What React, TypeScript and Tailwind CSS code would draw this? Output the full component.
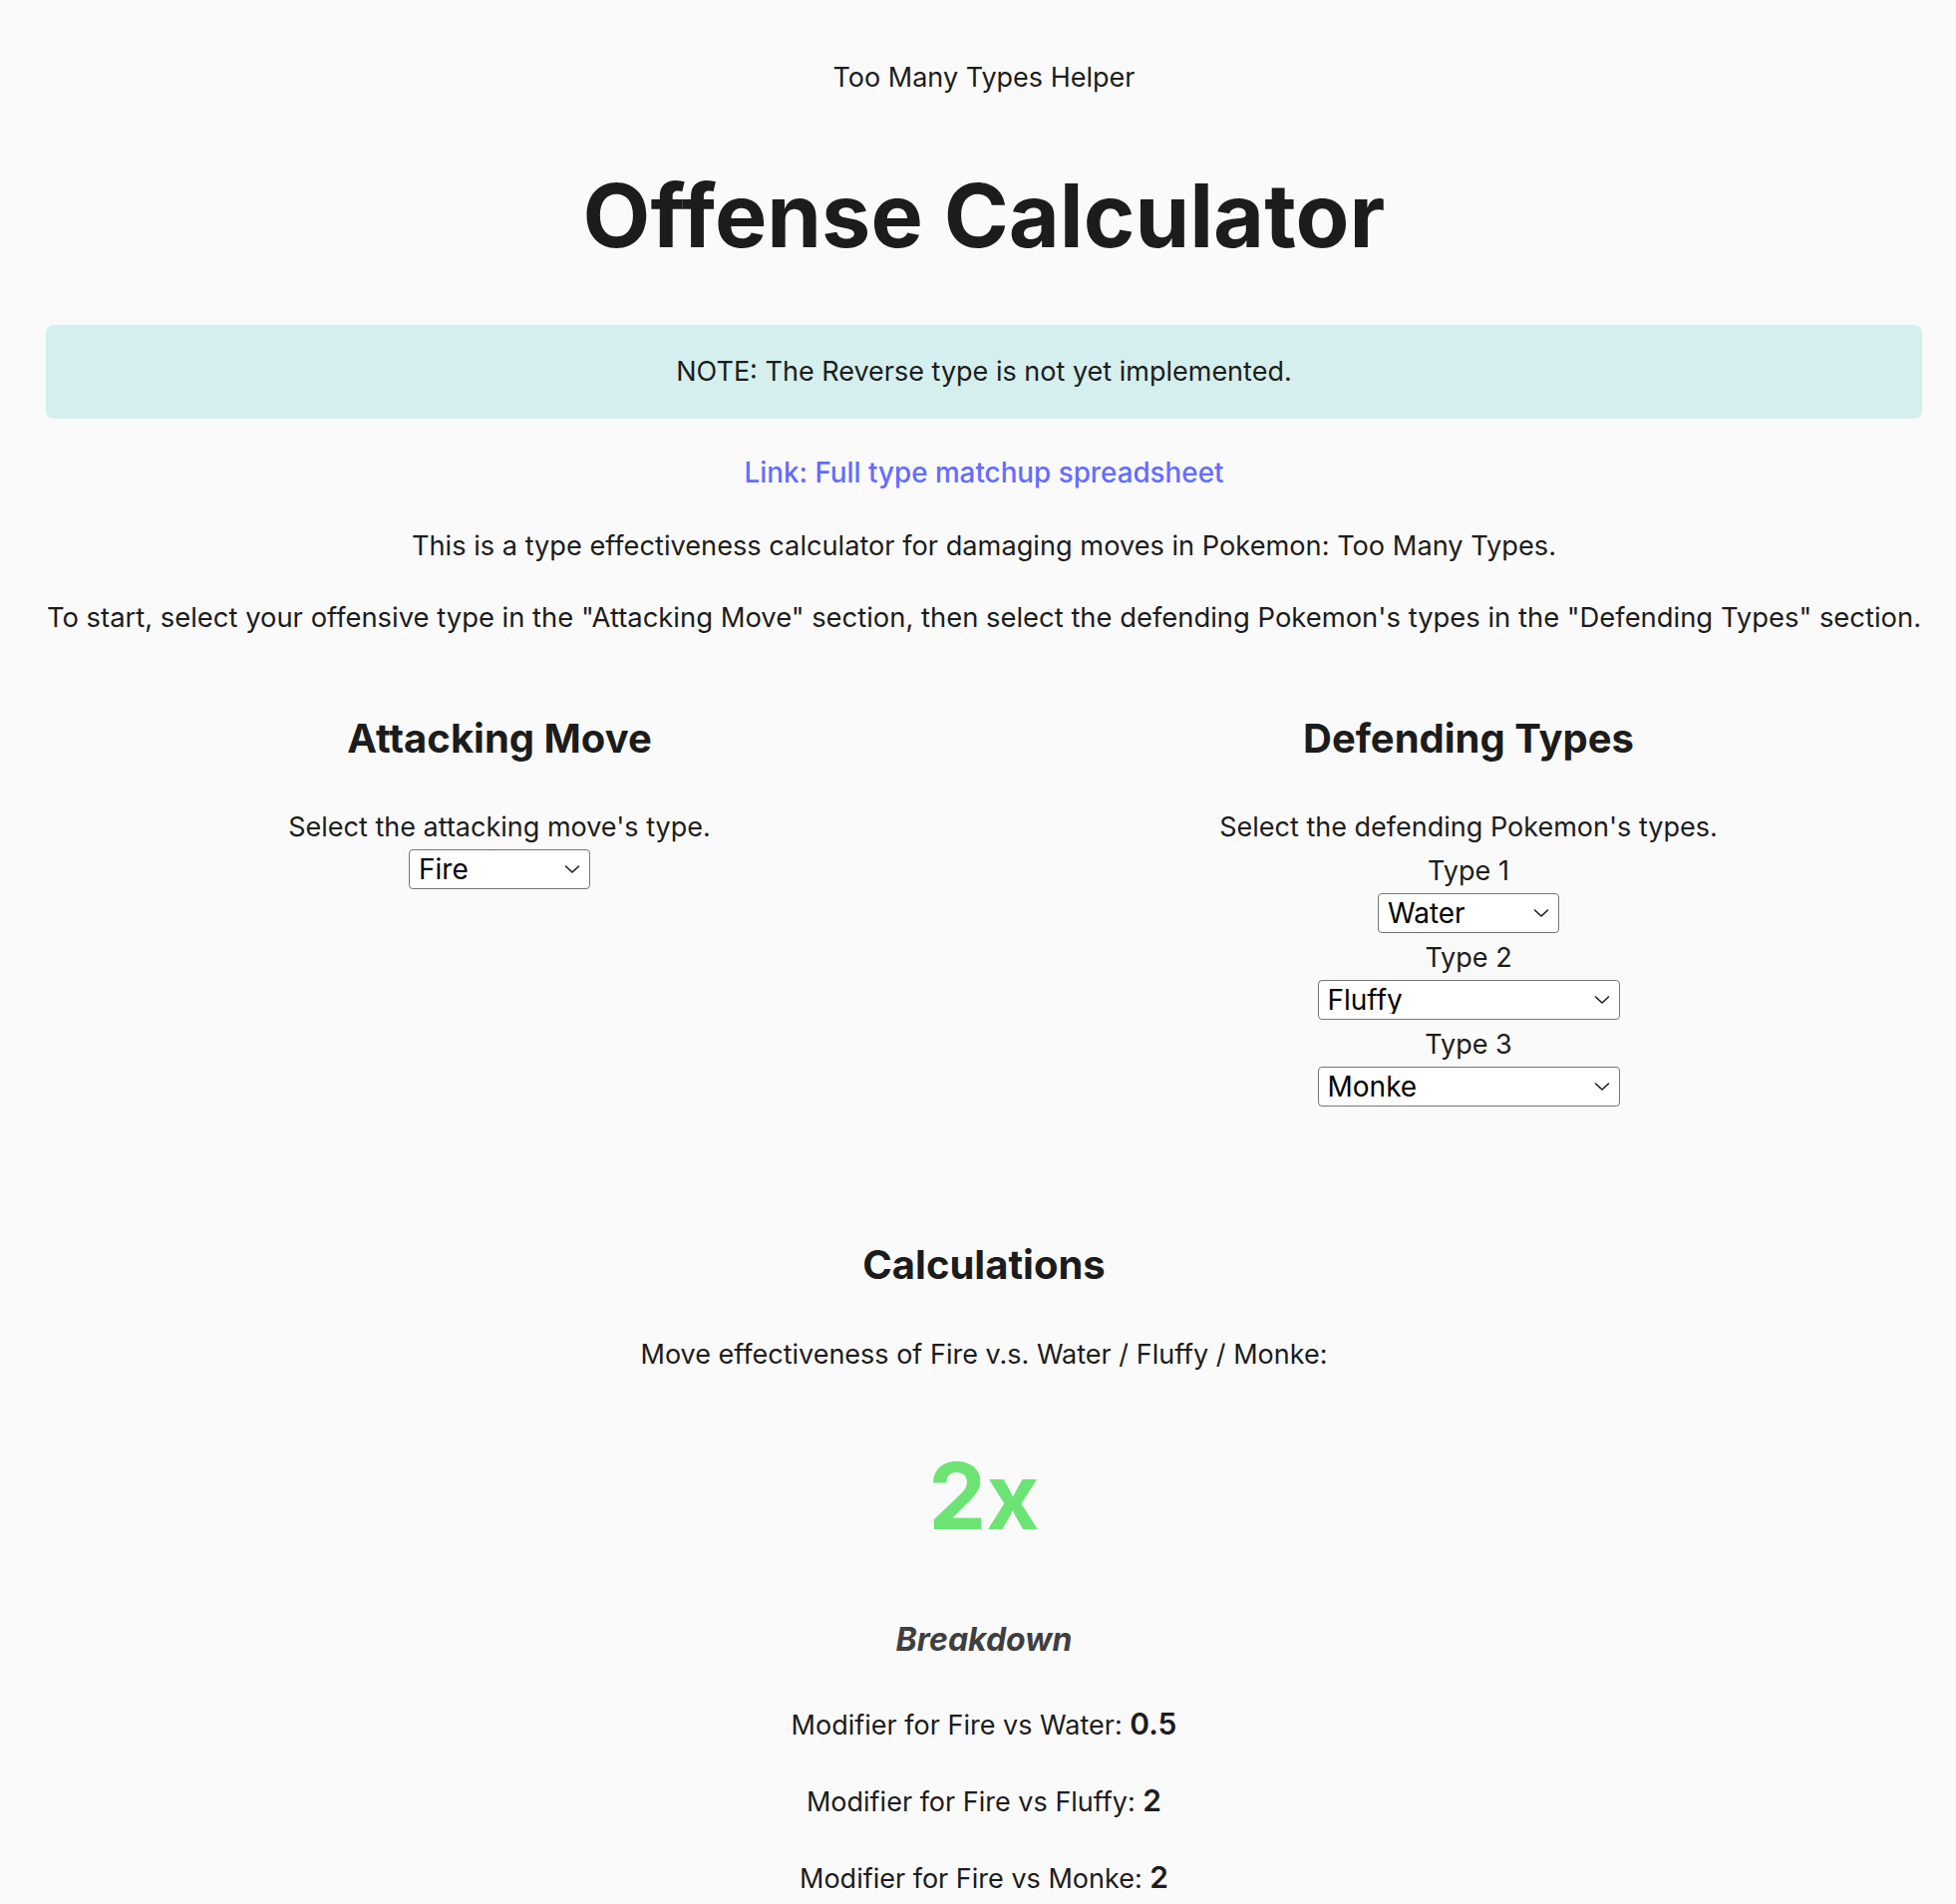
import { useState } from "react"

const TYPES = ["Fire", "Water", "Grass", "Fluffy", "Monke", "Normal", "Electric"]

const Chevron = () => (
	<svg width="16" height="10" viewBox="0 0 16 10" fill="none" className="pointer-events-none absolute right-[10px] top-1/2 -translate-y-1/2">
		<path d="M1.5 2 L8 8 L14.5 2" stroke="#1a1a1a" strokeWidth="1.6" strokeLinecap="round" strokeLinejoin="round" />
	</svg>
)

const TypeSelect = ({ value, onChange, width }: { value: string; onChange: (v: string) => void; width: string }) => {
	return (
		<div className={`relative mx-auto mb-[3px] ${width}`}>
			<select
				value={value}
				onChange={(e) => onChange(e.target.value)}
				className="appearance-none w-full h-[40px] bg-white border border-[#767676] rounded-[4px] pl-[9px] pr-8 text-[28px] text-black leading-none outline-none"
			>
				{TYPES.map((t) => (
					<option key={t} value={t}>{t}</option>
				))}
			</select>
			<Chevron />
		</div>
	)
}

const App = () => {
	const [attack, setAttack] = useState("Fire")
	const [type1, setType1] = useState("Water")
	const [type2, setType2] = useState("Fluffy")
	const [type3, setType3] = useState("Monke")

	const mods = [
		{ name: type1, value: "0.5" },
		{ name: type2, value: "2" },
		{ name: type3, value: "2" },
	]

	return (
		<div className="min-h-screen bg-[#fafafa] text-[#1c1c1c] pl-[46px] pr-[34px] text-center font-['Inter',sans-serif]">
			<p className="pt-[60px] text-[27px] leading-[36px]">Too Many Types Helper</p>
			<h1 className="mt-[76px] text-[88px] leading-none font-bold">Offense Calculator</h1>

			<div className="mt-[66px] rounded-[8px] bg-[#d5efee] py-[29px] text-[27px] leading-[36px]">
				NOTE: The Reverse type is not yet implemented.
			</div>

			<p className="mt-[36px] text-[27.8px] leading-[36px]">
				<a href="#" className="text-[#646cff] font-medium">Link: Full type matchup spreadsheet</a>
			</p>
			<p className="mt-[38px] text-[27.2px] leading-[36px]">
				This is a type effectiveness calculator for damaging moves in Pokemon: Too Many Types.
			</p>
			<p className="mt-[35px] text-[27.4px] leading-[36px]">
				To start, select your offensive type in the "Attacking Move" section, then select the defending Pokemon's types in the "Defending Types" section.
			</p>

			<div className="mt-[80px] grid grid-cols-2 gap-[62px]">
				<div className="flex flex-col">
					<h2 className="text-[40px] leading-[48px] font-bold">Attacking Move</h2>
					<p className="mt-[43px] text-[27px] leading-[44px]">Select the attacking move's type.</p>
					<TypeSelect value={attack} onChange={setAttack} width="w-[182px]" />
				</div>
				<div className="flex flex-col">
					<h2 className="text-[40px] leading-[48px] font-bold">Defending Types</h2>
					<p className="mt-[43px] text-[27px] leading-[44px]">Select the defending Pokemon's types.</p>
					<p className="text-[27px] leading-[44px]">Type 1</p>
					<TypeSelect value={type1} onChange={setType1} width="w-[182px]" />
					<p className="text-[27px] leading-[44px]">Type 2</p>
					<TypeSelect value={type2} onChange={setType2} width="w-[303px]" />
					<p className="text-[27px] leading-[44px]">Type 3</p>
					<TypeSelect value={type3} onChange={setType3} width="w-[303px]" />
				</div>
			</div>

			<h2 className="mt-[132px] text-[40px] leading-[48px] font-bold">Calculations</h2>
			<p className="mt-[48px] text-[27px] leading-[36px]">
				Move effectiveness of {attack} v.s. {type1} / {type2} / {type3}:
			</p>
			<p className="mt-[78px] text-[92px] leading-none font-bold text-[#6ce474]">2x</p>

			<h3 className="mt-[78px] text-[32px] leading-[40px] font-bold italic text-[#3f3f3f]">Breakdown</h3>
			<div className="flex flex-col">
				{mods.map((m, i) => (
					<p key={i} className={`${i === 0 ? "mt-[48px]" : "mt-[41px]"} text-[27px] leading-[36px]`}>
						Modifier for {attack} vs {m.name}: <span className="text-[30px] leading-none font-semibold">{m.value}</span>
					</p>
				))}
			</div>
		</div>
	)
}

export default App
